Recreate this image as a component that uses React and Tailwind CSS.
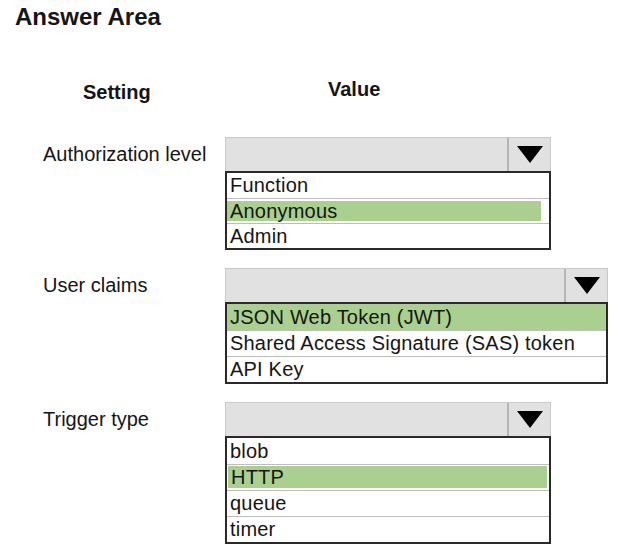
import React from 'react';

const settings = [
  {
    label: 'Authorization level',
    width: 'w-[326px]',
    rowHeight: 'h-[25px]',
    options: ['Function', 'Anonymous', 'Admin'],
    selected: 1,
    // highlight is inset a little in this one
    hl: 'py-[2px] pr-[8px]',
  },
  {
    label: 'User claims',
    width: 'w-[383px]',
    rowHeight: 'h-[26px]',
    options: ['JSON Web Token (JWT)', 'Shared Access Signature (SAS) token', 'API Key'],
    selected: 0,
    hl: '',
  },
  {
    label: 'Trigger type',
    width: 'w-[326px]',
    rowHeight: 'h-[26px]',
    options: ['blob', 'HTTP', 'queue', 'timer'],
    selected: 1,
    hl: 'pt-[1px] pb-[2px] pl-[1px] pr-[2px]',
  },
];

const Caret = () => (
  <svg width="26" height="17" viewBox="0 0 26 17">
    <polygon points="0,0 26,0 13,17" fill="#000" />
  </svg>
);

const Dropdown = ({ item }) => (
  <div className={item.width}>
    {/* closed select box */}
    <div className="h-[34px] flex bg-[#e1e1e1] border border-[#c9c9c9] border-b-0">
      <div className="flex-1" />
      <div className="w-[43px] border-l-2 border-[#b5b5b5] flex items-center justify-center">
        <Caret />
      </div>
    </div>
    {/* option list */}
    <div className="border-2 border-[#2a2a2a] bg-white">
      {item.options.map((opt, i) => (
        <div
          key={opt}
          className={`${item.rowHeight} ${i > 0 ? 'border-t border-[#bdbdbd]' : ''} ${i === item.selected ? item.hl : ''} flex`}
        >
          <div
            className={`flex-1 flex items-center pl-[3px] text-[20px] leading-[25px] tracking-[0.2px] ${
              i === item.selected ? 'bg-[#a9d08e]' : ''
            }`}
          >
            {opt}
          </div>
        </div>
      ))}
    </div>
  </div>
);

export default function App() {
  return (
    <div className="w-[618px] h-[555px] bg-white text-[#151515] font-['Liberation_Sans',Arial,sans-serif] overflow-hidden">
      <h1 className="pl-[15px] pt-[3px] text-[24px] leading-[28px] font-bold">Answer Area</h1>

      <div className="flex mt-[46px] text-[20px] leading-[24px] font-bold">
        <div className="w-[225px] pl-[83px] pt-[3px]">Setting</div>
        <div className="pl-[103px]">Value</div>
      </div>

      <div className="mt-[33px] flex flex-col gap-[18px]">
        {settings.map((s) => (
          <div key={s.label} className="flex items-start">
            <div className="w-[225px] h-[34px] flex items-center pl-[43px] text-[20px]">{s.label}</div>
            <Dropdown item={s} />
          </div>
        ))}
      </div>
    </div>
  );
}
